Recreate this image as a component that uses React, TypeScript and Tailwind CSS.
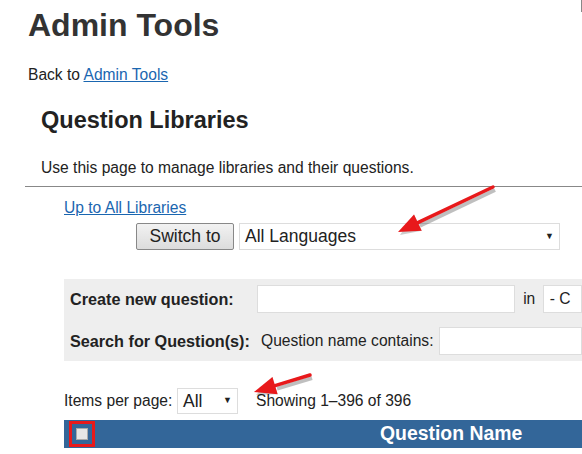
import React from "react";

function Arrow({ x1, y1, x2, y2 }: { x1: number; y1: number; x2: number; y2: number }) {
  const a = Math.atan2(y2 - y1, x2 - x1);
  const L = 22, W = 9;
  const bx = x2 - L * Math.cos(a), by = y2 - L * Math.sin(a);
  const p1 = `${bx + W * Math.sin(a)},${by - W * Math.cos(a)}`;
  const p2 = `${bx - W * Math.sin(a)},${by + W * Math.cos(a)}`;
  return (
    <g>
      <line x1={x1 + 2} y1={y1 + 3} x2={bx + 2} y2={by + 3} stroke="rgba(0,0,0,0.25)" strokeWidth={4} />
      <polygon points={`${x2 + 2},${y2 + 3} ${p1} ${p2}`} fill="rgba(0,0,0,0.2)" />
      <line x1={x1} y1={y1} x2={bx} y2={by} stroke="#e8191b" strokeWidth={3.5} strokeLinecap="round" />
      <polygon points={`${x2},${y2} ${p1} ${p2}`} fill="#e8191b" />
    </g>
  );
}

export default function App() {
  return (
    <div className="relative w-[582px] h-[454px] overflow-hidden bg-white text-[#222]" style={{ fontFamily: '"Liberation Sans", Arial, sans-serif' }}>
      <div className="absolute right-0 top-0 w-px h-[12px] bg-[#888]" />
      <h1 className="pl-[28px] pt-[6px] text-[32px] font-bold text-[#333] leading-[38px]">Admin Tools</h1>
      <p className="pl-[28px] mt-[22px] text-[15.6px] leading-[18px]">
        Back to <a className="text-[#1a66b0] underline">Admin Tools</a>
      </p>
      <h2 className="pl-[41px] mt-[22px] text-[23.5px] font-bold leading-[28px]">Question Libraries</h2>
      <p className="pl-[41px] mt-[25px] text-[15.6px] leading-[18px]">Use this page to manage libraries and their questions.</p>
      <div className="ml-[25px] mt-[9px] h-px bg-[#888]" />
      <div className="pl-[64px] mt-[12px] text-[15.6px] leading-[18px]">
        <a className="text-[#1a66b0] underline">Up to All Libraries</a>
      </div>
      <div className="flex items-center mt-[6px] pl-[136px] gap-[5px]">
        <div className="w-[98px] h-[27px] border border-[#888] rounded-[2px] bg-gradient-to-b from-[#f2f2f2] to-[#dcdcdc] flex items-center justify-center text-[17.5px]">Switch to</div>
        <div className="w-[321px] h-[27px] border border-[#ddd] flex items-center justify-between px-[5px] text-[17.5px]">
          <span>All Languages</span><span className="text-[9px]">▼</span>
        </div>
      </div>
      <div className="ml-[64px] mt-[29px] h-[82px] bg-[#eeeeee] text-[15.6px] pl-[6px] flex flex-col justify-center gap-[14px]">
        <div className="flex items-center">
          <span className="font-bold text-[16.2px] w-[191px]">Create new question:</span>
          <div className="w-[264px] h-[28px] bg-white border border-[#ddd]" />
          <span className="ml-[8px] w-[20px]">in</span>
          <div className="w-[40px] h-[28px] bg-white border border-[#ddd] pl-[6px] flex items-center">- C</div>
        </div>
        <div className="flex items-center">
          <span className="font-bold text-[16.2px] w-[191px] whitespace-nowrap">Search for Question(s):</span>
          <span className="w-[178px] whitespace-nowrap">Question name contains:</span>
          <div className="flex-1 h-[28px] bg-white border border-[#ddd]" />
        </div>
      </div>
      <div className="flex items-center pl-[64px] mt-[27px] text-[15.6px]">
        <span className="w-[113px] whitespace-nowrap">Items per page:</span>
        <div className="w-[61px] h-[26px] border border-[#ddd] flex items-center justify-between px-[5px] text-[17.5px]">
          <span>All</span><span className="text-[9px]">▼</span>
        </div>
        <span className="ml-[18px]">Showing 1–396 of 396</span>
      </div>
      <div className="ml-[64px] mt-[6px] h-[28px] bg-[#336699] flex items-center relative">
        <div className="ml-[5px] w-[26px] h-[26px] border-[3px] border-[#e8191b] flex items-center justify-center">
          <div className="w-[12px] h-[12px] bg-[#e6e6e6] border border-[#aaa]" />
        </div>
        <span className="absolute left-[316px] text-white font-bold text-[19.4px] whitespace-nowrap">Question Name</span>
      </div>
      <svg className="absolute left-0 top-0 pointer-events-none" width="582" height="454">
        <Arrow x1={493} y1={187} x2={398} y2={232} />
        <Arrow x1={310} y1={375} x2={254} y2={392} />
      </svg>
    </div>
  );
}
